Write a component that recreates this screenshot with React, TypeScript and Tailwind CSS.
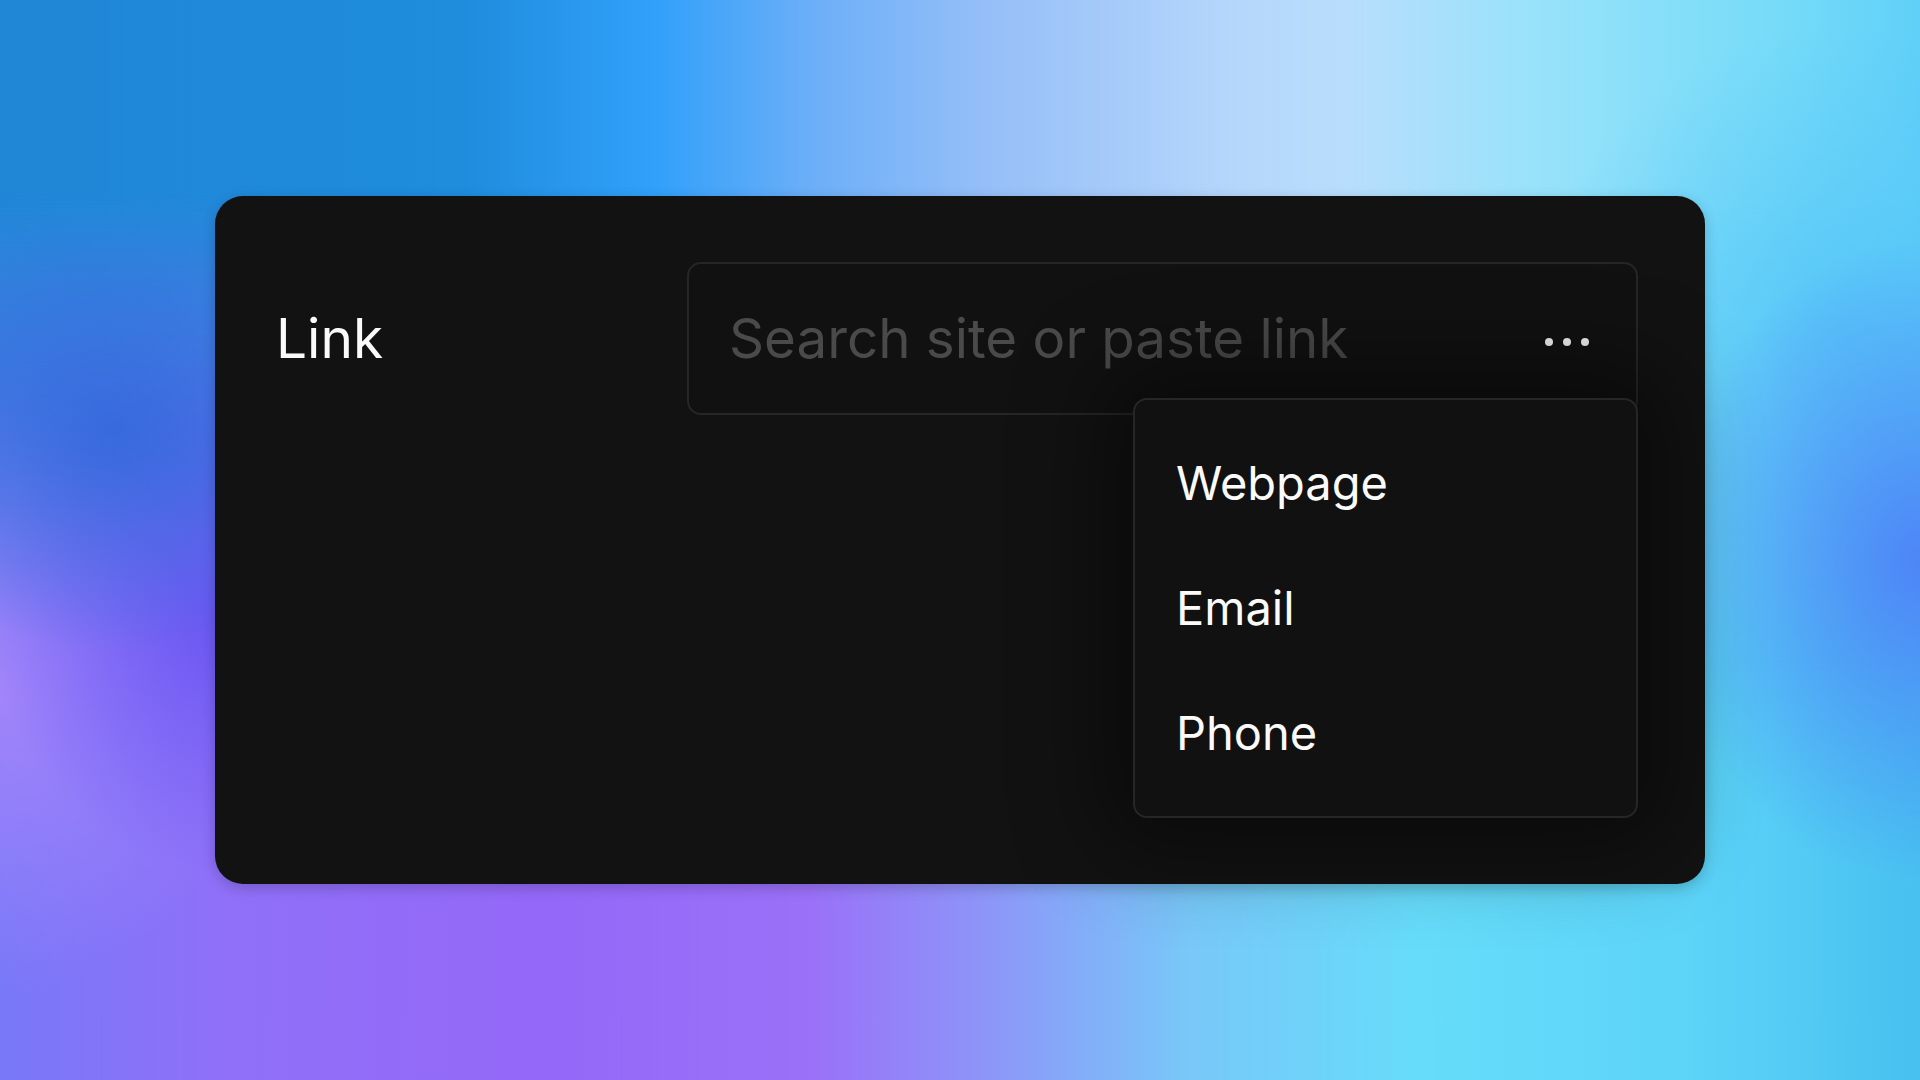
const ITEMS = ['Webpage', 'Email', 'Phone']

function Dots() {
  return (
    <div className="flex items-center gap-[10px] mt-[7px] shrink-0">
      <span className="w-[8px] h-[8px] rounded-full bg-[#f2f2f2]" />
      <span className="w-[8px] h-[8px] rounded-full bg-[#f2f2f2]" />
      <span className="w-[8px] h-[8px] rounded-full bg-[#f2f2f2]" />
    </div>
  )
}

function LinkMenu() {
  return (
    <div className="absolute right-[-2px] top-[134px] w-[505px] h-[420px] rounded-[14px] border-2 border-[#262626] bg-[#111111] shadow-[0_0_90px_30px_rgba(0,0,0,0.45)] flex flex-col justify-center pl-[41px]">
      {ITEMS.map((item) => (
        <div key={item} className="h-[125px] flex items-center text-[47px] text-[#fafafa]">
          {item}
        </div>
      ))}
    </div>
  )
}

export default function App() {
  return (
    <div className="relative h-screen w-full overflow-hidden flex items-center justify-center font-[Inter,sans-serif] bg-[linear-gradient(90deg,#7878f8_0%,#9070f8_12%,#9468f8_28%,#9a70f8_42%,#8c98f8_52%,#78c8f8_62%,#66dcfa_74%,#5cd4f8_88%,#48c0f0_100%)]">
      {/* top band of the backdrop, faded out downward */}
      <div className="absolute inset-0 bg-[linear-gradient(90deg,#2086d6_0%,#1f8cdc_24%,#30a0fa_34%,#6aaef8_42%,#98c0f8_52%,#b4d6fb_64%,#b8defc_70%,#98e2fa_80%,#78dcf8_92%,#60d0f8_100%)] [mask-image:linear-gradient(to_bottom,black_18%,transparent_62%)]" />
      {/* side blobs */}
      <div className="absolute inset-0 bg-[radial-gradient(ellipse_260px_220px_at_6%_40%,rgba(52,104,220,0.9),transparent),radial-gradient(ellipse_240px_260px_at_12%_57%,rgba(104,84,242,0.95),transparent),radial-gradient(ellipse_260px_300px_at_0%_64%,rgba(166,134,250,0.9),transparent),radial-gradient(ellipse_260px_320px_at_100%_52%,rgba(78,130,248,0.95),transparent),radial-gradient(ellipse_300px_300px_at_96%_30%,rgba(84,196,248,0.8),transparent)]" />

      <div className="relative w-[1490px] h-[688px] rounded-[28px] bg-[#121212] shadow-[0_4px_14px_rgba(0,0,0,0.2)] flex items-start pt-[66px] pl-[61px] pr-[67px]">
        <div className="w-[411px] h-[153px] flex items-center text-[55px] text-[#fafafa]">Link</div>
        <div className="relative flex-1 h-[153px] rounded-[14px] border-2 border-[#262626] bg-[#111111] flex items-center pl-[40px] pr-[47px]">
          <span className="flex-1 text-[54.7px] text-[#4a4a4a]">Search site or paste link</span>
          <Dots />
          <LinkMenu />
        </div>
      </div>
    </div>
  )
}
